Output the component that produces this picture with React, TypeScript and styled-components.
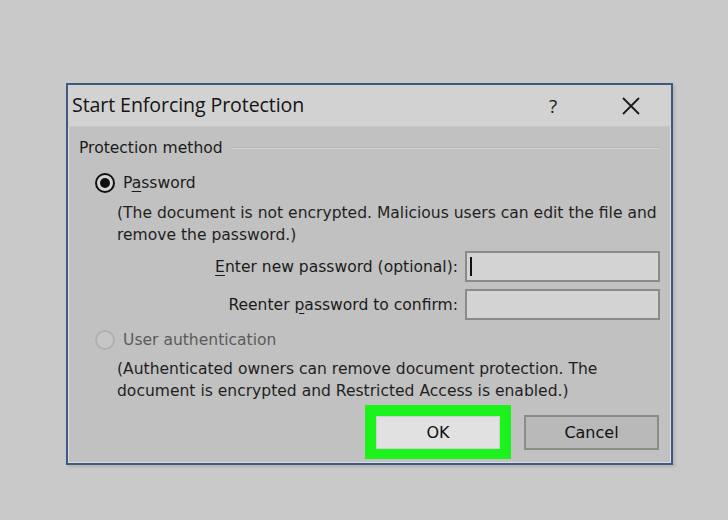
import styled, {createGlobalStyle} from "styled-components";

const GlobalStyle = createGlobalStyle`
  html, body {
    margin: 0;
    background: #c9c9c9;
  }
  body {
    font-family: "DejaVu Sans", Tahoma, sans-serif;
    color: #1b1b1b;
  }
`;

const Page = styled.div`
  width: 728px;
  height: 520px;
  padding: 83px 0 0 66px;
  box-sizing: border-box;
`;

const Dialog = styled.div`
  width: 607px;
  height: 382px;
  box-sizing: border-box;
  border: 2px solid #3d5b80;
  box-shadow: inset 0 0 0 1px #d9dde3, 2px 2px 3px rgba(0, 0, 0, 0.12);
  display: flex;
  flex-direction: column;
  background: #c1c1c1;
`;

const TitleBar = styled.div`
  height: 41px;
  flex-shrink: 0;
  display: flex;
  align-items: center;
  padding-left: 4px;
  background: #d2d2d2;
  border-bottom: 1px solid #c6c6c6;
`;

const Title = styled.div`
  flex: 1;
  font-family: "Open Sans", "Noto Sans", sans-serif;
  font-size: 19.6px;
  color: #151515;
  letter-spacing: -0.1px;
  margin-top: -2px;
`;

const TitleButton = styled.div<{ $gap?: number }>`
  width: 40px;
  height: 41px;
  display: flex;
  align-items: center;
  justify-content: center;
  margin-right: ${p => p.$gap ?? 20}px;
  font-family: "Open Sans", sans-serif;
  font-size: 19px;
  color: #1a1a1a;
`;

const Body = styled.div`
  flex: 1;
  padding: 10px 11px 0 11px;
  font-size: 15.55px;
`;

const GroupHeader = styled.div`
  display: flex;
  align-items: center;
  gap: 8px;
  height: 22px;
`;

const GroupLine = styled.div`
  flex: 1;
  height: 1px;
  background: #d6d6d6;
  border-top: 1px solid #b3b3b3;
  margin-right: 1px;
`;

const RadioRow = styled.div<{ $top: number }>`
  display: flex;
  align-items: center;
  gap: 8px;
  height: 22px;
  margin-top: ${p => p.$top}px;
  padding-left: 16px;
`;

const RadioCircle = styled.div<{ $checked?: boolean; $disabled?: boolean }>`
  width: 20px;
  height: 20px;
  box-sizing: border-box;
  border-radius: 50%;
  border: 2px solid ${p => (p.$disabled ? "#b0b0b0" : "#111")};
  background: ${p => (p.$disabled ? "#c6c6c6" : "#d4d4d4")};
  display: flex;
  align-items: center;
  justify-content: center;

  &::after {
    content: "";
    display: ${p => (p.$checked ? "block" : "none")};
    width: 10px;
    height: 10px;
    border-radius: 50%;
    background: #111;
  }
`;

const RadioLabel = styled.span<{ $disabled?: boolean }>`
  color: ${p => (p.$disabled ? "#5a5a5a" : "#1b1b1b")};
`;

const Description = styled.div<{ $top: number }>`
  margin-top: ${p => p.$top}px;
  padding-left: 38px;
  line-height: 22px;
  color: #1f1f1f;
`;

const FieldGrid = styled.div`
  display: grid;
  grid-template-columns: 379px 195px;
  column-gap: 7px;
  row-gap: 7px;
  margin-top: 5px;
  align-items: center;
`;

const FieldLabel = styled.label`
  text-align: right;
`;

const Key = styled.span`
  text-decoration: underline;
  text-underline-offset: 3px;
`;

const TextBox = styled.div<{ $caret?: boolean }>`
  height: 31px;
  box-sizing: border-box;
  border: 2px solid #8a8a8a;
  background: #d3d3d3;
  position: relative;

  &::after {
    content: "";
    display: ${p => (p.$caret ? "block" : "none")};
    position: absolute;
    left: 3px;
    top: 4px;
    width: 2px;
    height: 19px;
    background: #111;
  }
`;

const Footer = styled.div`
  display: flex;
  justify-content: flex-end;
  align-items: center;
  gap: 13px;
  margin-top: 13px;
  padding-right: 1px;
`;

const Highlight = styled.div`
  background: #1cf21c;
  padding: 11px 11px 10px 11px;
  margin: -11px 0 -10px 0;
`;

const Button = styled.div<{ $primary?: boolean }>`
  width: ${p => (p.$primary ? 124 : 135)}px;
  height: ${p => (p.$primary ? 33 : 35)}px;
  box-sizing: border-box;
  display: flex;
  align-items: center;
  justify-content: center;
  font-size: 16px;
  color: #111;
  background: ${p => (p.$primary ? "#e1e1e1" : "#b9b9b9")};
  border: ${p => (p.$primary ? "1px solid #cfcfcf" : "2px solid #8b8b8b")};
`;

export default function App() {
    return (
        <Page>
            <GlobalStyle/>
            <Dialog>
                <TitleBar>
                    <Title>Start Enforcing Protection</Title>
                    <TitleButton $gap={38}>?</TitleButton>
                    <TitleButton>
                        <svg width="20" height="20" viewBox="0 0 20 20">
                            <path d="M2 2 L18 18 M18 2 L2 18" stroke="#1a1a1a" strokeWidth="1.8" fill="none"/>
                        </svg>
                    </TitleButton>
                </TitleBar>
                <Body>
                    <GroupHeader>
                        <span>Protection method</span>
                        <GroupLine/>
                    </GroupHeader>
                    <RadioRow $top={13}>
                        <RadioCircle $checked/>
                        <RadioLabel>P<Key>a</Key>ssword</RadioLabel>
                    </RadioRow>
                    <Description $top={8}>
                        (The document is not encrypted. Malicious users can edit the file and<br/>
                        remove the password.)
                    </Description>
                    <FieldGrid>
                        <FieldLabel><Key>E</Key>nter new password (optional):</FieldLabel>
                        <TextBox $caret/>
                        <FieldLabel>Reenter <Key>p</Key>assword to confirm:</FieldLabel>
                        <TextBox/>
                    </FieldGrid>
                    <RadioRow $top={9}>
                        <RadioCircle $disabled/>
                        <RadioLabel $disabled>User authentication</RadioLabel>
                    </RadioRow>
                    <Description $top={7}>
                        (Authenticated owners can remove document protection. The<br/>
                        document is encrypted and Restricted Access is enabled.)
                    </Description>
                    <Footer>
                        <Highlight>
                            <Button $primary>OK</Button>
                        </Highlight>
                        <Button>Cancel</Button>
                    </Footer>
                </Body>
            </Dialog>
        </Page>
    );
}
